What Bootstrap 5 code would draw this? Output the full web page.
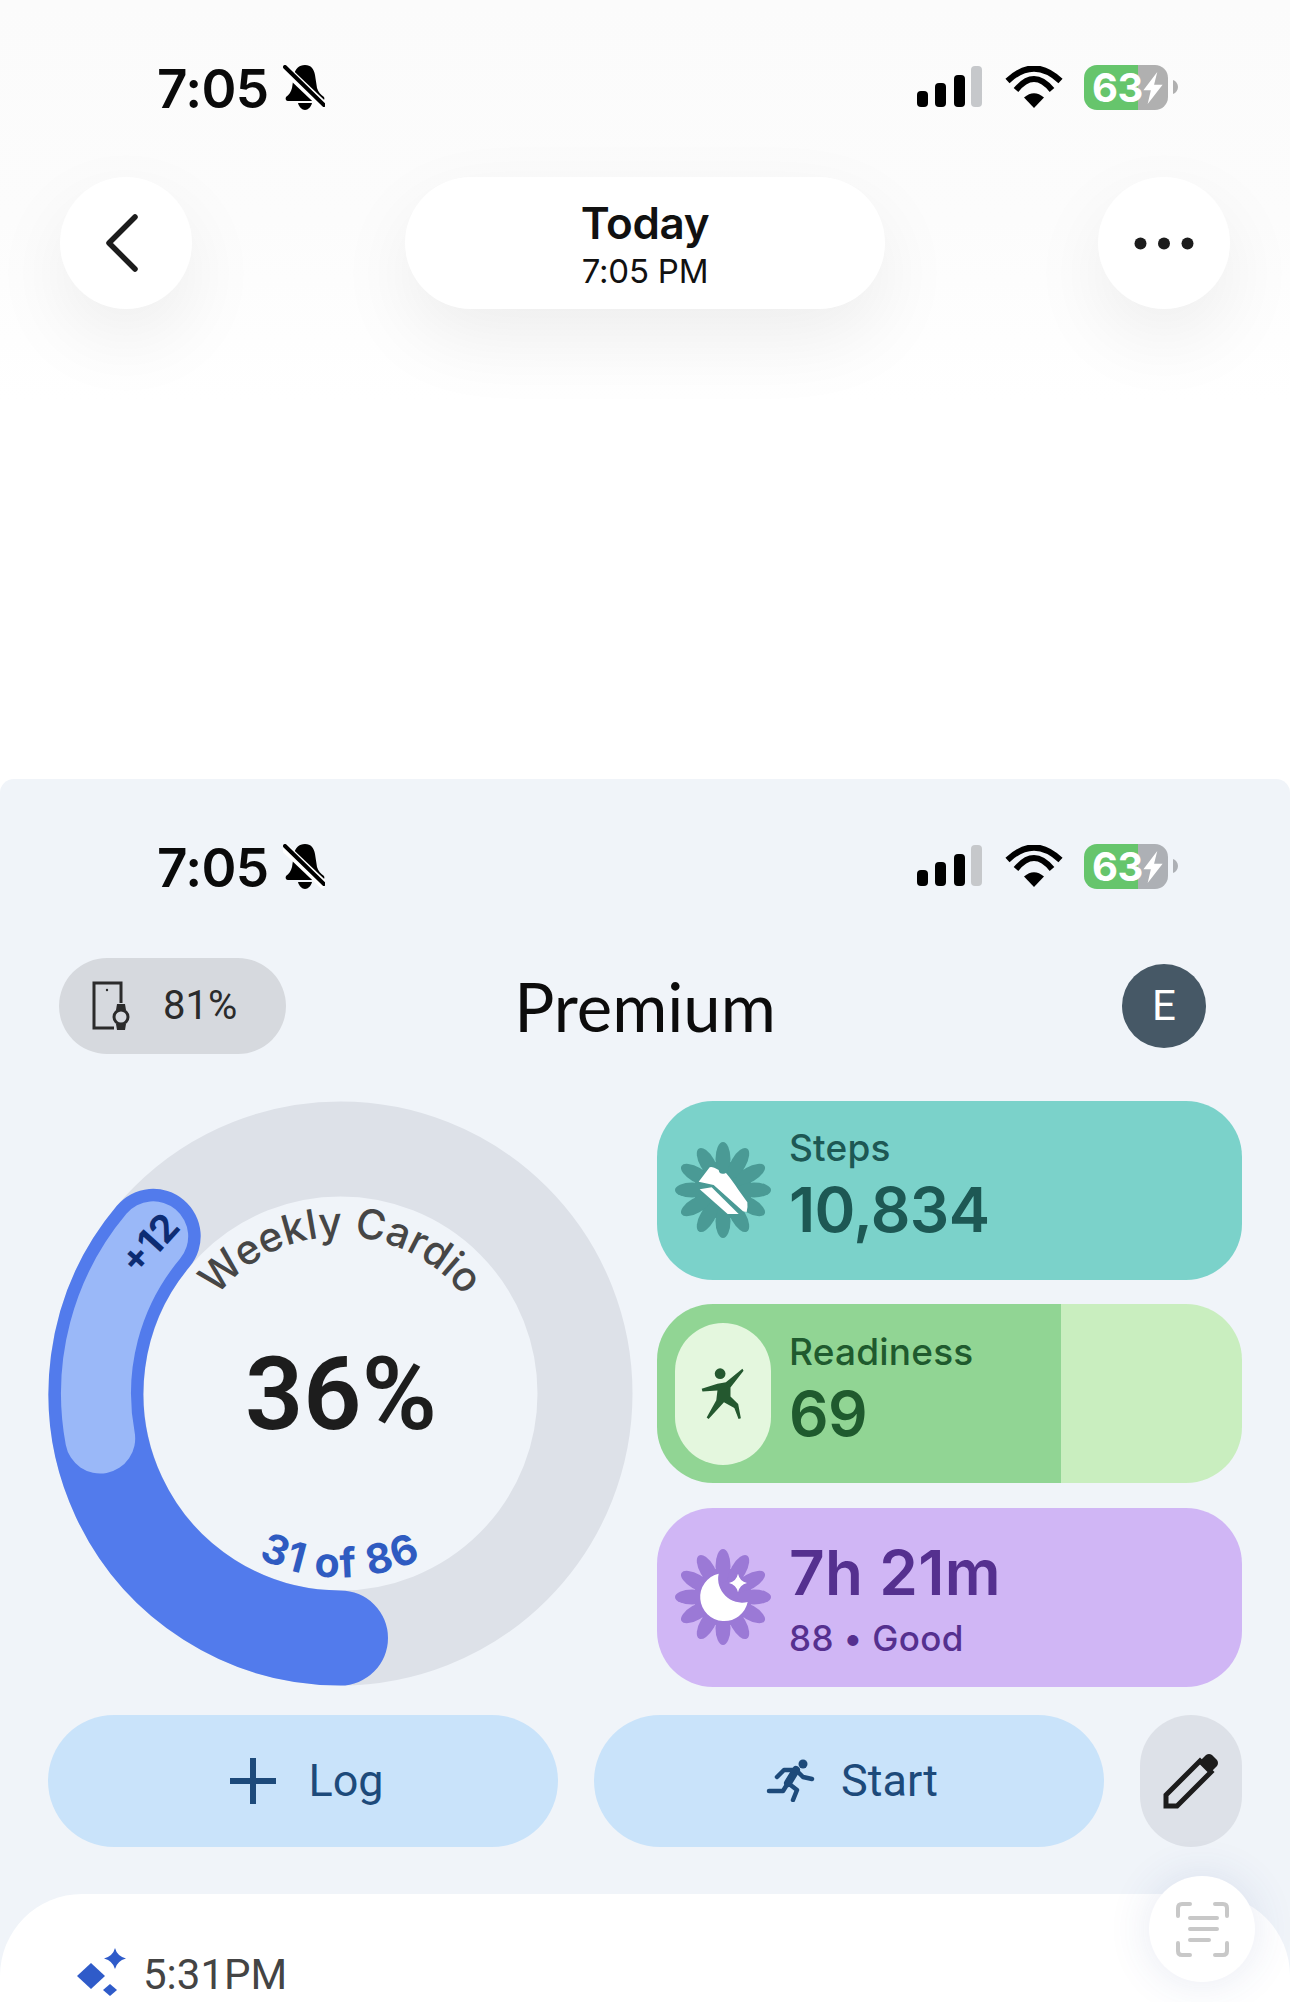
<!DOCTYPE html>
<html lang="en">
<head>
  <meta charset="UTF-8" />
  <meta name="viewport" content="width=device-width, initial-scale=1" />
  <title>Today</title>
  <link href="https://cdn.jsdelivr.net/npm/bootstrap@5.3.0/dist/css/bootstrap.min.css" rel="stylesheet" />
  <style>
    body { width: 1290px; height: 2002px; overflow: hidden; background: #fff; font-family: Roboto, sans-serif; }
    .head-area { height: 779px; background: linear-gradient(#fbfbfb 0, #fcfcfc 220px, #fff 400px); }
    .status-row { height: 45px; padding: 0 111px 0 157px; margin-top: 65px; margin-bottom: 67px; }
    .panel-area .status-row { margin-bottom: 68.5px; }
    .clock { font: 600 53px/45px Inter, sans-serif; color: #0a0a0a; letter-spacing: -.6px; padding-top: 3px; }
    .bell-gap { gap: 14px; }
    .batt { width: 84px; height: 45px; border-radius: 13px; color: #fff; font: 700 40px/45px Inter, sans-serif; padding-left: 8px; letter-spacing: -.5px; }
    .batt-bolt { position: absolute; left: 58px; top: 7px; }
    .batt-nub { margin-left: 4px; }
    .nav-line { padding: 0 60px; }
    .round-btn { width: 132px; height: 132px; background: #fff; box-shadow: 0 30px 80px rgba(0,0,0,.065); }
    .title-pill { width: 480px; height: 132px; background: #fff; border-radius: 66px; box-shadow: 0 30px 80px rgba(0,0,0,.065); padding-top: 3px; }
    .title-main { font: 600 44px/50px Inter, sans-serif; color: #111; letter-spacing: -.4px; }
    .title-sub { font: 400 33px/40px Inter, sans-serif; color: #111; letter-spacing: -.2px; margin-top: 3px; }
    .chevron-back { margin-left: -8px; }
    .panel-area { height: 1223px; background: #f0f4f9; border-radius: 14px 14px 0 0; overflow: hidden; position: relative; }
    .panel-top { display: grid; grid-template-columns: 1fr auto 1fr; align-items: center; padding: 0 59px; height: 96px; }
    .watch-pill { width: 227px; height: 96px; background: #d6d9de; border-radius: 48px; padding-left: 33px; gap: 33px; }
    .watch-pct { font: 400 40px/1 Roboto, sans-serif; color: #2b2b2b; }
    .page-title { font: 400 67px/96px Lato, sans-serif; color: #0c0c0c; }
    .avatar-e { width: 84px; height: 84px; background: #465866; color: #fff; font: 400 42px/84px Roboto, sans-serif; margin-right: 25px; justify-self: end; text-align: center; }
    .main-line { padding-left: 48px; gap: 24px; margin-top: 47px; }
    .ring-box { width: 585px; height: 584px; }
    .stat-stack { width: 585px; gap: 24.5px; }
    .stat-card { height: 179px; border-radius: 56px; padding-left: 18px; gap: 18px; overflow: hidden; }
    .stat-label { font: 500 37px/40px Inter, sans-serif; letter-spacing: .2px; }
    .stat-sub { font: 500 35px/40px Inter, sans-serif; letter-spacing: .35px; margin-top: 3px; }
    .stat-value { font: 600 62px/84px Inter, sans-serif; letter-spacing: -.6px; }
    .sleep-text { margin-bottom: 6px; }
    .sleep-text .stat-value { letter-spacing: .3px; }
    .teal-card { background: #7bd2ca; color: #1d5854; }
    .green-card { color: #1f5a2e; }
    .purple-card { background: #d0b6f5; color: #55308f; }
    .mood-pill { width: 96px; height: 142px; border-radius: 48px; background: #e4f7de; }
    .action-line { padding-left: 48px; gap: 36px; margin-top: 28px; }
    .action-btn { width: 510px; height: 132px; border-radius: 66px; background: #c9e3fa; color: #1d4a7a; gap: 32px; font: 400 45px/1 Roboto, sans-serif; }
    .log-btn { padding-left: 8px; }
    .start-btn { gap: 26px; padding-left: 6px; }
    .edit-btn { width: 102px; height: 132px; border-radius: 51px; background: #dde1e8; }
    .sheet-area { height: 109px; background: #fff; border-radius: 82px 82px 0 0; margin-top: 47px; padding: 54px 0 0 77px; gap: 16px; }
    .sheet-time { font: 400 42px/40px Roboto, sans-serif; color: #444; margin-top: 7px; }
    .scan-btn { position: absolute; right: 35px; top: 1097px; width: 106px; height: 106px; background: #fff; box-shadow: 0 0 44px rgba(50,70,150,.12); }
    .ring-label { font: 500 41px Inter, sans-serif; fill: #464646; }
    .ring-count { font: 700 41px Inter, sans-serif; fill: #2f5bc1; letter-spacing: 1.5px; }
    .ring-extra { font: 700 38px Inter, sans-serif; fill: #0d2c73; }
    .ring-pct { font: 600 102px Roboto, sans-serif; fill: #1d1d1d; }
  </style>
</head>
<body class="m-0">
  <svg class="d-none">
    <symbol id="bell-off" viewBox="0 0 42 45">
      <path d="M22 0c6 0 9 4 10 10l2 13c1 4 4 7 7 9 1 2 0 4-2 4H5c-2 0-3-2-2-4 3-2 5-5 6-9l2-13C12 4 16 0 22 0z" />
      <path d="M15 38h14c-1 4-4 7-7 7s-6-3-7-7z" />
      <path d="M1 3l41 39" stroke="#fff" stroke-width="9" />
      <path d="M2 2l39 38" stroke="#000" stroke-width="4" stroke-linecap="round" />
    </symbol>
    <symbol id="wifi-mark" viewBox="0 0 58 42">
      <path d="M2.500 15Q29-10 55.500 15" fill="none" stroke="#000" stroke-width="6" />
      <path d="M11 24Q29 2 47 24" fill="none" stroke="#000" stroke-width="6" />
      <path d="M29 42L19 31.500Q29 23 39 31.500z" />
    </symbol>
    <symbol id="burst" viewBox="-48 -48 96 96">
      <circle r="29" />
      <ellipse cy="-31" rx="7.500" ry="17" />
      <ellipse cy="-31" rx="7.500" ry="17" transform="rotate(30)" />
      <ellipse cy="-31" rx="7.500" ry="17" transform="rotate(60)" />
      <ellipse cy="-31" rx="7.500" ry="17" transform="rotate(90)" />
      <ellipse cy="-31" rx="7.500" ry="17" transform="rotate(120)" />
      <ellipse cy="-31" rx="7.500" ry="17" transform="rotate(150)" />
      <ellipse cy="-31" rx="7.500" ry="17" transform="rotate(180)" />
      <ellipse cy="-31" rx="7.500" ry="17" transform="rotate(210)" />
      <ellipse cy="-31" rx="7.500" ry="17" transform="rotate(240)" />
      <ellipse cy="-31" rx="7.500" ry="17" transform="rotate(270)" />
      <ellipse cy="-31" rx="7.500" ry="17" transform="rotate(300)" />
      <ellipse cy="-31" rx="7.500" ry="17" transform="rotate(330)" />
    </symbol>
    <symbol id="signal-wifi" viewBox="0 0 167 45">
      <rect x="0" y="26" width="11" height="16" rx="4" />
      <rect x="18" y="18" width="11" height="24" rx="4" />
      <rect x="37" y="10" width="11" height="32" rx="4" />
      <rect x="54" y="1" width="11" height="41" rx="4" fill="#c6c8cb" />
      <use href="#wifi-mark" x="88" y="1" width="58" height="42" />
    </symbol>
    <symbol id="bolt" viewBox="0 0 20 30">
      <path d="M14 0L1 17h7l-3 13 14-18h-8z" fill="#fff" />
    </symbol>
  </svg>

  <div class="head-area overflow-hidden">
    <div class="status-row d-flex justify-content-between align-items-center">
      <div class="d-flex align-items-center bell-gap">
        <span class="clock">7:05</span>
        <svg width="42" height="45"><use href="#bell-off" /></svg>
      </div>
      <div class="d-flex align-items-center">
        <svg width="167" height="45"><use href="#signal-wifi" /></svg>
        <div class="batt position-relative" style="background:linear-gradient(90deg,#66c56c 64%,#b0b0b0 64%)">63<svg class="batt-bolt" width="22" height="32"><use href="#bolt" /></svg></div>
        <svg class="batt-nub" width="7" height="45" viewBox="0 0 7 45"><path d="M1 15c3 1 5 4 5 7s-2 6-5 7z" fill="#b0b0b0" /></svg>
      </div>
    </div>
    <div class="nav-line d-flex justify-content-between">
      <div class="round-btn rounded-circle d-flex align-items-center justify-content-center">
        <svg class="chevron-back" width="34" height="58" viewBox="0 0 34 58"><path d="M30 3L4 29l26 26" fill="none" stroke="#1c1c1c" stroke-width="5.500" stroke-linecap="round" stroke-linejoin="round" /></svg>
      </div>
      <div class="title-pill d-flex flex-column align-items-center justify-content-center">
        <div class="title-main">Today</div>
        <div class="title-sub">7:05 PM</div>
      </div>
      <div class="round-btn rounded-circle d-flex align-items-center justify-content-center">
        <svg width="60" height="13" viewBox="0 0 60 13" fill="#1c1c1c"><circle cx="6.500" cy="6.500" r="6" /><circle cx="30" cy="6.500" r="6" /><circle cx="53.500" cy="6.500" r="6" /></svg>
      </div>
    </div>
  </div>

  <div class="panel-area">
    <div class="status-row d-flex justify-content-between align-items-center">
      <div class="d-flex align-items-center bell-gap">
        <span class="clock">7:05</span>
        <svg width="42" height="45"><use href="#bell-off" /></svg>
      </div>
      <div class="d-flex align-items-center">
        <svg width="167" height="45"><use href="#signal-wifi" /></svg>
        <div class="batt position-relative" style="background:linear-gradient(90deg,#66c56c 64%,#adb0b5 64%)">63<svg class="batt-bolt" width="22" height="32"><use href="#bolt" /></svg></div>
        <svg class="batt-nub" width="7" height="45" viewBox="0 0 7 45"><path d="M1 15c3 1 5 4 5 7s-2 6-5 7z" fill="#adb0b5" /></svg>
      </div>
    </div>

    <div class="panel-top">
      <div class="watch-pill d-flex align-items-center">
        <svg width="38" height="49" viewBox="0 0 38 49" fill="none" stroke="#2b2b2b" stroke-width="3">
          <path d="M29 22V2H2v45h20" />
          <circle cx="15" cy="9" r="1.200" fill="#2b2b2b" stroke="none" />
          <circle cx="29" cy="36" r="7" />
          <path d="M25 23h8l1 6h-10zM24 43h10l-1 6h-8z" fill="#2b2b2b" stroke="none" />
        </svg>
        <span class="watch-pct">81%</span>
      </div>
      <div class="page-title">Premium</div>
      <div class="avatar-e rounded-circle">E</div>
    </div>

    <div class="main-line d-flex">
      <div class="ring-box">
        <svg width="585" height="585" viewBox="0 0 585 585">
          <defs>
            <path id="top-curve" d="M135.500 292.500A157 157 0 0 1 449.500 292.500" />
            <path id="bottom-curve" d="M108.500 292.500A184 184 0 0 0 476.500 292.500" />
          </defs>
          <circle cx="292.500" cy="292.500" r="244.500" fill="none" stroke="#dde1e8" stroke-width="95" />
          <path d="M292.500 537A244.500 244.500 0 0 1 105.200 135.300" fill="none" stroke="#527bec" stroke-width="95" stroke-linecap="round" />
          <path d="M52.200 337.500A244.500 244.500 0 0 1 105.200 135.300" fill="none" stroke="#9ab8f8" stroke-width="70" stroke-linecap="round" />
          <text class="ring-label" text-anchor="middle"><textPath href="#top-curve" startOffset="50%">Weekly Cardio</textPath></text>
          <text class="ring-count" text-anchor="middle"><textPath href="#bottom-curve" startOffset="50%">31 of 86</textPath></text>
          <text class="ring-extra" text-anchor="middle" transform="translate(102 143) rotate(-48)" y="13">+12</text>
          <text class="ring-pct" text-anchor="middle" x="293" y="328">36%</text>
        </svg>
      </div>

      <div class="stat-stack d-flex flex-column">
        <div class="stat-card teal-card d-flex align-items-center">
          <svg width="96" height="96" viewBox="-48 -48 96 96">
            <use href="#burst" x="-48" y="-48" width="96" height="96" fill="#4a9a95" />
            <g transform="scale(.3333) translate(-158 -150)" fill="#fff">
              <path d="M85 125l33-43q7-4 27 8 3 17 22 9 17 20 37 50l27 38q2 15-2 29l-11-2-88-79z" />
              <path d="M88 148l36-6 81 80h-33z" />
            </g>
          </svg>
          <div>
            <div class="stat-label">Steps</div>
            <div class="stat-value">10,834</div>
          </div>
        </div>

        <div class="stat-card green-card d-flex align-items-center" style="background:linear-gradient(90deg,#91d594 69%,#c9eebf 69%)">
          <div class="mood-pill d-flex align-items-center justify-content-center">
            <svg width="48" height="57" viewBox="130 695 125 145" fill="#24582f">
              <circle cx="185" cy="716" r="14" />
              <path d="M137 755l41-13q12-2 22-4l43-35 3 5-34 44v23l20 20 7 37-6 2-11-29-27-15-40 44-5-4 25-45 3-25-39 2z" />
            </svg>
          </div>
          <div>
            <div class="stat-label">Readiness</div>
            <div class="stat-value">69</div>
          </div>
        </div>

        <div class="stat-card purple-card d-flex align-items-center">
          <svg width="96" height="96" viewBox="-48 -48 96 96">
            <use href="#burst" x="-48" y="-48" width="96" height="96" fill="#9b79d6" />
            <g transform="scale(.3333) translate(-158 -167)" fill="#fff">
              <path d="M145 97A72 72 0 1 0 232 182 72 72 0 0 1 145 97z" />
              <path d="M203 97q5 23 27 28-22 5-27 28-5-23-27-28 22-5 27-28z" />
            </g>
          </svg>
          <div class="sleep-text">
            <div class="stat-value">7h 21m</div>
            <div class="stat-sub">88 • Good</div>
          </div>
        </div>
      </div>
    </div>

    <div class="action-line d-flex">
      <div class="action-btn log-btn d-flex align-items-center justify-content-center">
        <svg width="46" height="46" viewBox="0 0 46 46" fill="#1d4a7a"><path d="M20 0h6v20h20v6H26v20h-6V26H0v-6h20z" /></svg>
        <span>Log</span>
      </div>
      <div class="action-btn start-btn d-flex align-items-center justify-content-center">
        <svg width="49" height="43" viewBox="0 0 49 43" fill="none" stroke="#1d4a7a" stroke-width="4.500" stroke-linejoin="round" stroke-linecap="round">
          <circle cx="37" cy="5" r="4.500" fill="#1d4a7a" stroke="none" />
          <path d="M30 11L22 24" stroke-width="8" />
          <path d="M30 11l7 7 9 2M30 11H18l-7 7M22 24l9 7-4 10M22 24l-5 8H3" />
        </svg>
        <span>Start</span>
      </div>
      <div class="edit-btn d-flex align-items-center justify-content-center">
        <svg width="56" height="56" viewBox="0 0 56 56">
          <path d="M3 53V42L37 8l11 11L14 53z" fill="none" stroke="#1c1c1c" stroke-width="5" />
          <path d="M37 8l6-6q3-2 6 0l5 5q2 3 0 6l-6 6z" fill="#1c1c1c" />
        </svg>
      </div>
    </div>

    <div class="sheet-area d-flex align-items-start">
      <svg width="50" height="48" viewBox="0 0 50 48" fill="#2f5bc9">
        <path d="M14 15l14 13-14 13L0 28z" />
        <path d="M38 0q2 8 11 10.500-9 2.500-11 10.500-2-8-11-10.500 9-2.500 11-10.500z" />
        <path d="M33 36l7 6-7 6-7-6z" />
      </svg>
      <span class="sheet-time">5:31PM</span>
    </div>

    <div class="scan-btn rounded-circle d-flex align-items-center justify-content-center">
      <svg width="53" height="55" viewBox="0 0 53 55" fill="none" stroke="#c8c8c8" stroke-width="4" stroke-linecap="round">
        <path d="M2 14V6q0-4 4-4h8M39 2h8q4 0 4 4v8M2 41v8q0 4 4 4h8M39 53h8q4 0 4-4v-8M14 16h27M14 27h27M14 38h19" />
      </svg>
    </div>
  </div>

  <script src="https://cdn.jsdelivr.net/npm/bootstrap@5.3.0/dist/js/bootstrap.bundle.min.js"></script>
</body>
</html>
